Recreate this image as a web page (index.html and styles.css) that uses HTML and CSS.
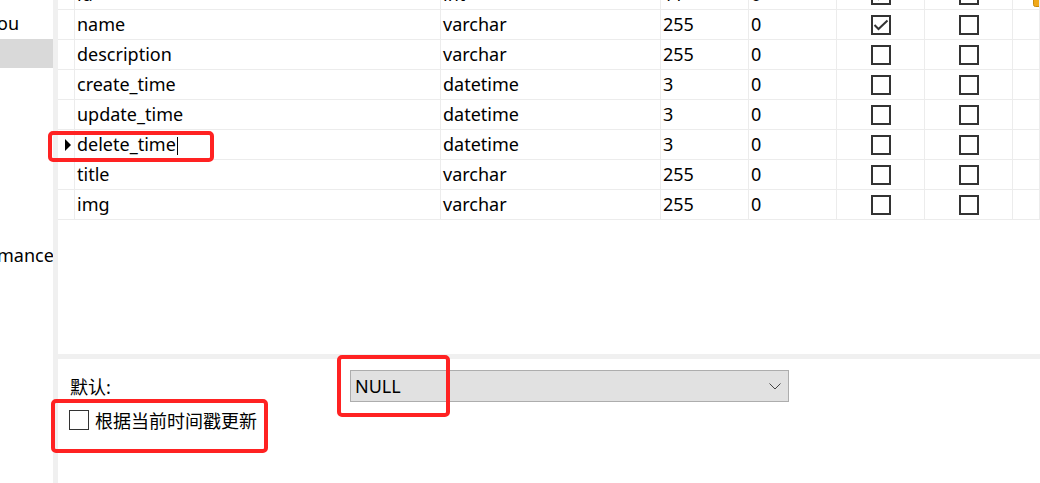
FILE: index.html
```html
<!DOCTYPE html>
<html lang="zh-CN">
<head>
<meta charset="utf-8">
<title>Table design</title>
<link rel="stylesheet" href="styles.css">
</head>
<body>
<div class="app">
  <aside class="sidebar">
    <div class="nav-item">ore</div>
    <div class="nav-item">ou</div>
    <div class="nav-item selected"></div>
    <div class="nav-gap"></div>
    <div class="nav-item">mance</div>
  </aside>
  <div class="splitter"></div>
  <main class="editor">
    <section class="grid-area">
      <div class="grid">
        <div class="row">
          <div class="cell head"></div>
          <div class="cell">id</div>
          <div class="cell">int</div>
          <div class="cell">11</div>
          <div class="cell">0</div>
          <div class="cell check"><span class="cb checked"><svg viewBox="0 0 16 16" width="16" height="16"><polyline points="1.5,8 5.5,12 14.5,3.5" /></svg></span></div>
          <div class="cell check"><span class="cb"></span></div>
          <div class="cell keycell"><svg class="key" width="12" height="12" viewBox="0 0 12 12"><rect x="0.5" y="0.5" width="11" height="11" rx="2" fill="#f0a818" stroke="#c98a08"/></svg></div>
        </div>
        <div class="row">
          <div class="cell head"></div>
          <div class="cell">name</div>
          <div class="cell">varchar</div>
          <div class="cell">255</div>
          <div class="cell">0</div>
          <div class="cell check"><span class="cb checked"><svg viewBox="0 0 16 16" width="16" height="16"><polyline points="1.5,8 5.5,12 14.5,3.5" /></svg></span></div>
          <div class="cell check"><span class="cb"></span></div>
          <div class="cell"></div>
        </div>
        <div class="row">
          <div class="cell head"></div>
          <div class="cell">description</div>
          <div class="cell">varchar</div>
          <div class="cell">255</div>
          <div class="cell">0</div>
          <div class="cell check"><span class="cb"></span></div>
          <div class="cell check"><span class="cb"></span></div>
          <div class="cell"></div>
        </div>
        <div class="row">
          <div class="cell head"></div>
          <div class="cell">create_time</div>
          <div class="cell">datetime</div>
          <div class="cell">3</div>
          <div class="cell">0</div>
          <div class="cell check"><span class="cb"></span></div>
          <div class="cell check"><span class="cb"></span></div>
          <div class="cell"></div>
        </div>
        <div class="row">
          <div class="cell head"></div>
          <div class="cell">update_time</div>
          <div class="cell">datetime</div>
          <div class="cell">3</div>
          <div class="cell">0</div>
          <div class="cell check"><span class="cb"></span></div>
          <div class="cell check"><span class="cb"></span></div>
          <div class="cell"></div>
        </div>
        <div class="row current">
          <div class="cell head"><span class="pointer"></span></div>
          <div class="cell">delete_time<span class="caret"></span></div>
          <div class="cell">datetime</div>
          <div class="cell">3</div>
          <div class="cell">0</div>
          <div class="cell check"><span class="cb"></span></div>
          <div class="cell check"><span class="cb"></span></div>
          <div class="cell"></div>
        </div>
        <div class="row">
          <div class="cell head"></div>
          <div class="cell">title</div>
          <div class="cell">varchar</div>
          <div class="cell">255</div>
          <div class="cell">0</div>
          <div class="cell check"><span class="cb"></span></div>
          <div class="cell check"><span class="cb"></span></div>
          <div class="cell"></div>
        </div>
        <div class="row">
          <div class="cell head"></div>
          <div class="cell">img</div>
          <div class="cell">varchar</div>
          <div class="cell">255</div>
          <div class="cell">0</div>
          <div class="cell check"><span class="cb"></span></div>
          <div class="cell check"><span class="cb"></span></div>
          <div class="cell"></div>
        </div>
      </div>
    </section>
    <div class="hsplit"></div>
    <section class="props">
      <div class="prop-row">
        <span class="prop-label">默认:</span>
        <div class="select">
          <span>NULL</span>
          <svg class="chev" width="12" height="7" viewBox="0 0 12 7"><polyline points="0.5,0.5 6,6 11.5,0.5"/></svg>
        </div>
      </div>
      <div class="check-row">
        <span class="cb small"></span>
        <span class="check-label">根据当前时间戳更新</span>
      </div>
    </section>
  </main>
  <div class="mark mark-field"></div>
  <div class="mark mark-null"></div>
  <div class="mark mark-check"></div>
</div>
</body>
</html>
```

FILE: styles.css
```css
html, body {
  margin: 0;
  padding: 0;
  background: #fff;
}
body {
  font-family: "Noto Sans", "Noto Sans CJK SC", sans-serif;
  font-size: 18px;
  color: #000;
}
.app {
  position: relative;
  display: flex;
  width: 1040px;
  height: 483px;
  overflow: hidden;
}
.sidebar {
  width: 53px;
  flex: none;
  overflow: hidden;
  white-space: nowrap;
}
.nav-item {
  height: 30px;
  line-height: 29px;
  text-indent: -3px;
}
.nav-item:first-child {
  margin-top: -21px;
}
.nav-item.selected {
  height: 29px;
  background: #d9d9d9;
}
.nav-gap {
  height: 173px;
}
.splitter {
  width: 5px;
  flex: none;
  background: #f0f0f0;
}
.editor {
  flex: 1;
  display: flex;
  flex-direction: column;
  min-width: 0;
}
.grid-area {
  height: 354px;
  flex: none;
  overflow: hidden;
}
.grid {
  margin-top: -20px;
}
.row {
  display: grid;
  grid-template-columns: 17px 366px 220px 88px 88px 88px 88px 1fr;
  height: 30px;
}
.cell {
  box-sizing: border-box;
  border-right: 1px solid #ececec;
  border-bottom: 1px solid #ececec;
  padding-left: 2px;
  line-height: 29px;
  white-space: nowrap;
  overflow: hidden;
}
.cell.head {
  padding-left: 7px;
  display: flex;
  align-items: center;
}
.pointer {
  width: 0;
  height: 0;
  border-left: 6px solid #000;
  border-top: 6px solid transparent;
  border-bottom: 6px solid transparent;
}
.caret {
  display: inline-block;
  width: 1px;
  height: 18px;
  margin-left: 1px;
  background: #000;
  vertical-align: -4px;
}
.cell.check {
  padding-left: 0;
  display: flex;
  align-items: center;
  justify-content: center;
}
.cb {
  box-sizing: border-box;
  width: 20px;
  height: 20px;
  border: 2px solid #333;
  display: flex;
  align-items: center;
  justify-content: center;
  flex: none;
}
.cb svg polyline {
  fill: none;
  stroke: #333;
  stroke-width: 2;
}
.keycell {
  display: flex;
  align-items: flex-end;
  padding-left: 20px;
}
.key {
  flex: none;
  margin-bottom: 2px;
}
.hsplit {
  height: 5px;
  flex: none;
  background: #f0f0f0;
}
.props {
  flex: 1;
  padding: 11px 0 0 11px;
}
.prop-row {
  display: flex;
  align-items: center;
  height: 32px;
}
.prop-label {
  width: 281px;
  padding-left: 1px;
  box-sizing: border-box;
}
.select {
  box-sizing: border-box;
  width: 439px;
  height: 32px;
  border: 1px solid #adadad;
  background: #e1e1e1;
  display: flex;
  align-items: center;
  justify-content: space-between;
  padding: 0 7px 0 4px;
}
.chev polyline {
  fill: none;
  stroke: #444;
  stroke-width: 1;
}
.check-row {
  display: flex;
  align-items: center;
  gap: 6px;
  margin-top: 8px;
  height: 20px;
}
.cb.small {
  border-width: 1px;
}
.mark {
  position: absolute;
  box-sizing: border-box;
  border: 4px solid #ff2222;
  border-radius: 5px;
}
.mark-field {
  left: 48px;
  top: 131px;
  width: 166px;
  height: 31px;
}
.mark-null {
  left: 337px;
  top: 355px;
  width: 113px;
  height: 62px;
}
.mark-check {
  left: 51px;
  top: 399px;
  width: 217px;
  height: 54px;
}
```
